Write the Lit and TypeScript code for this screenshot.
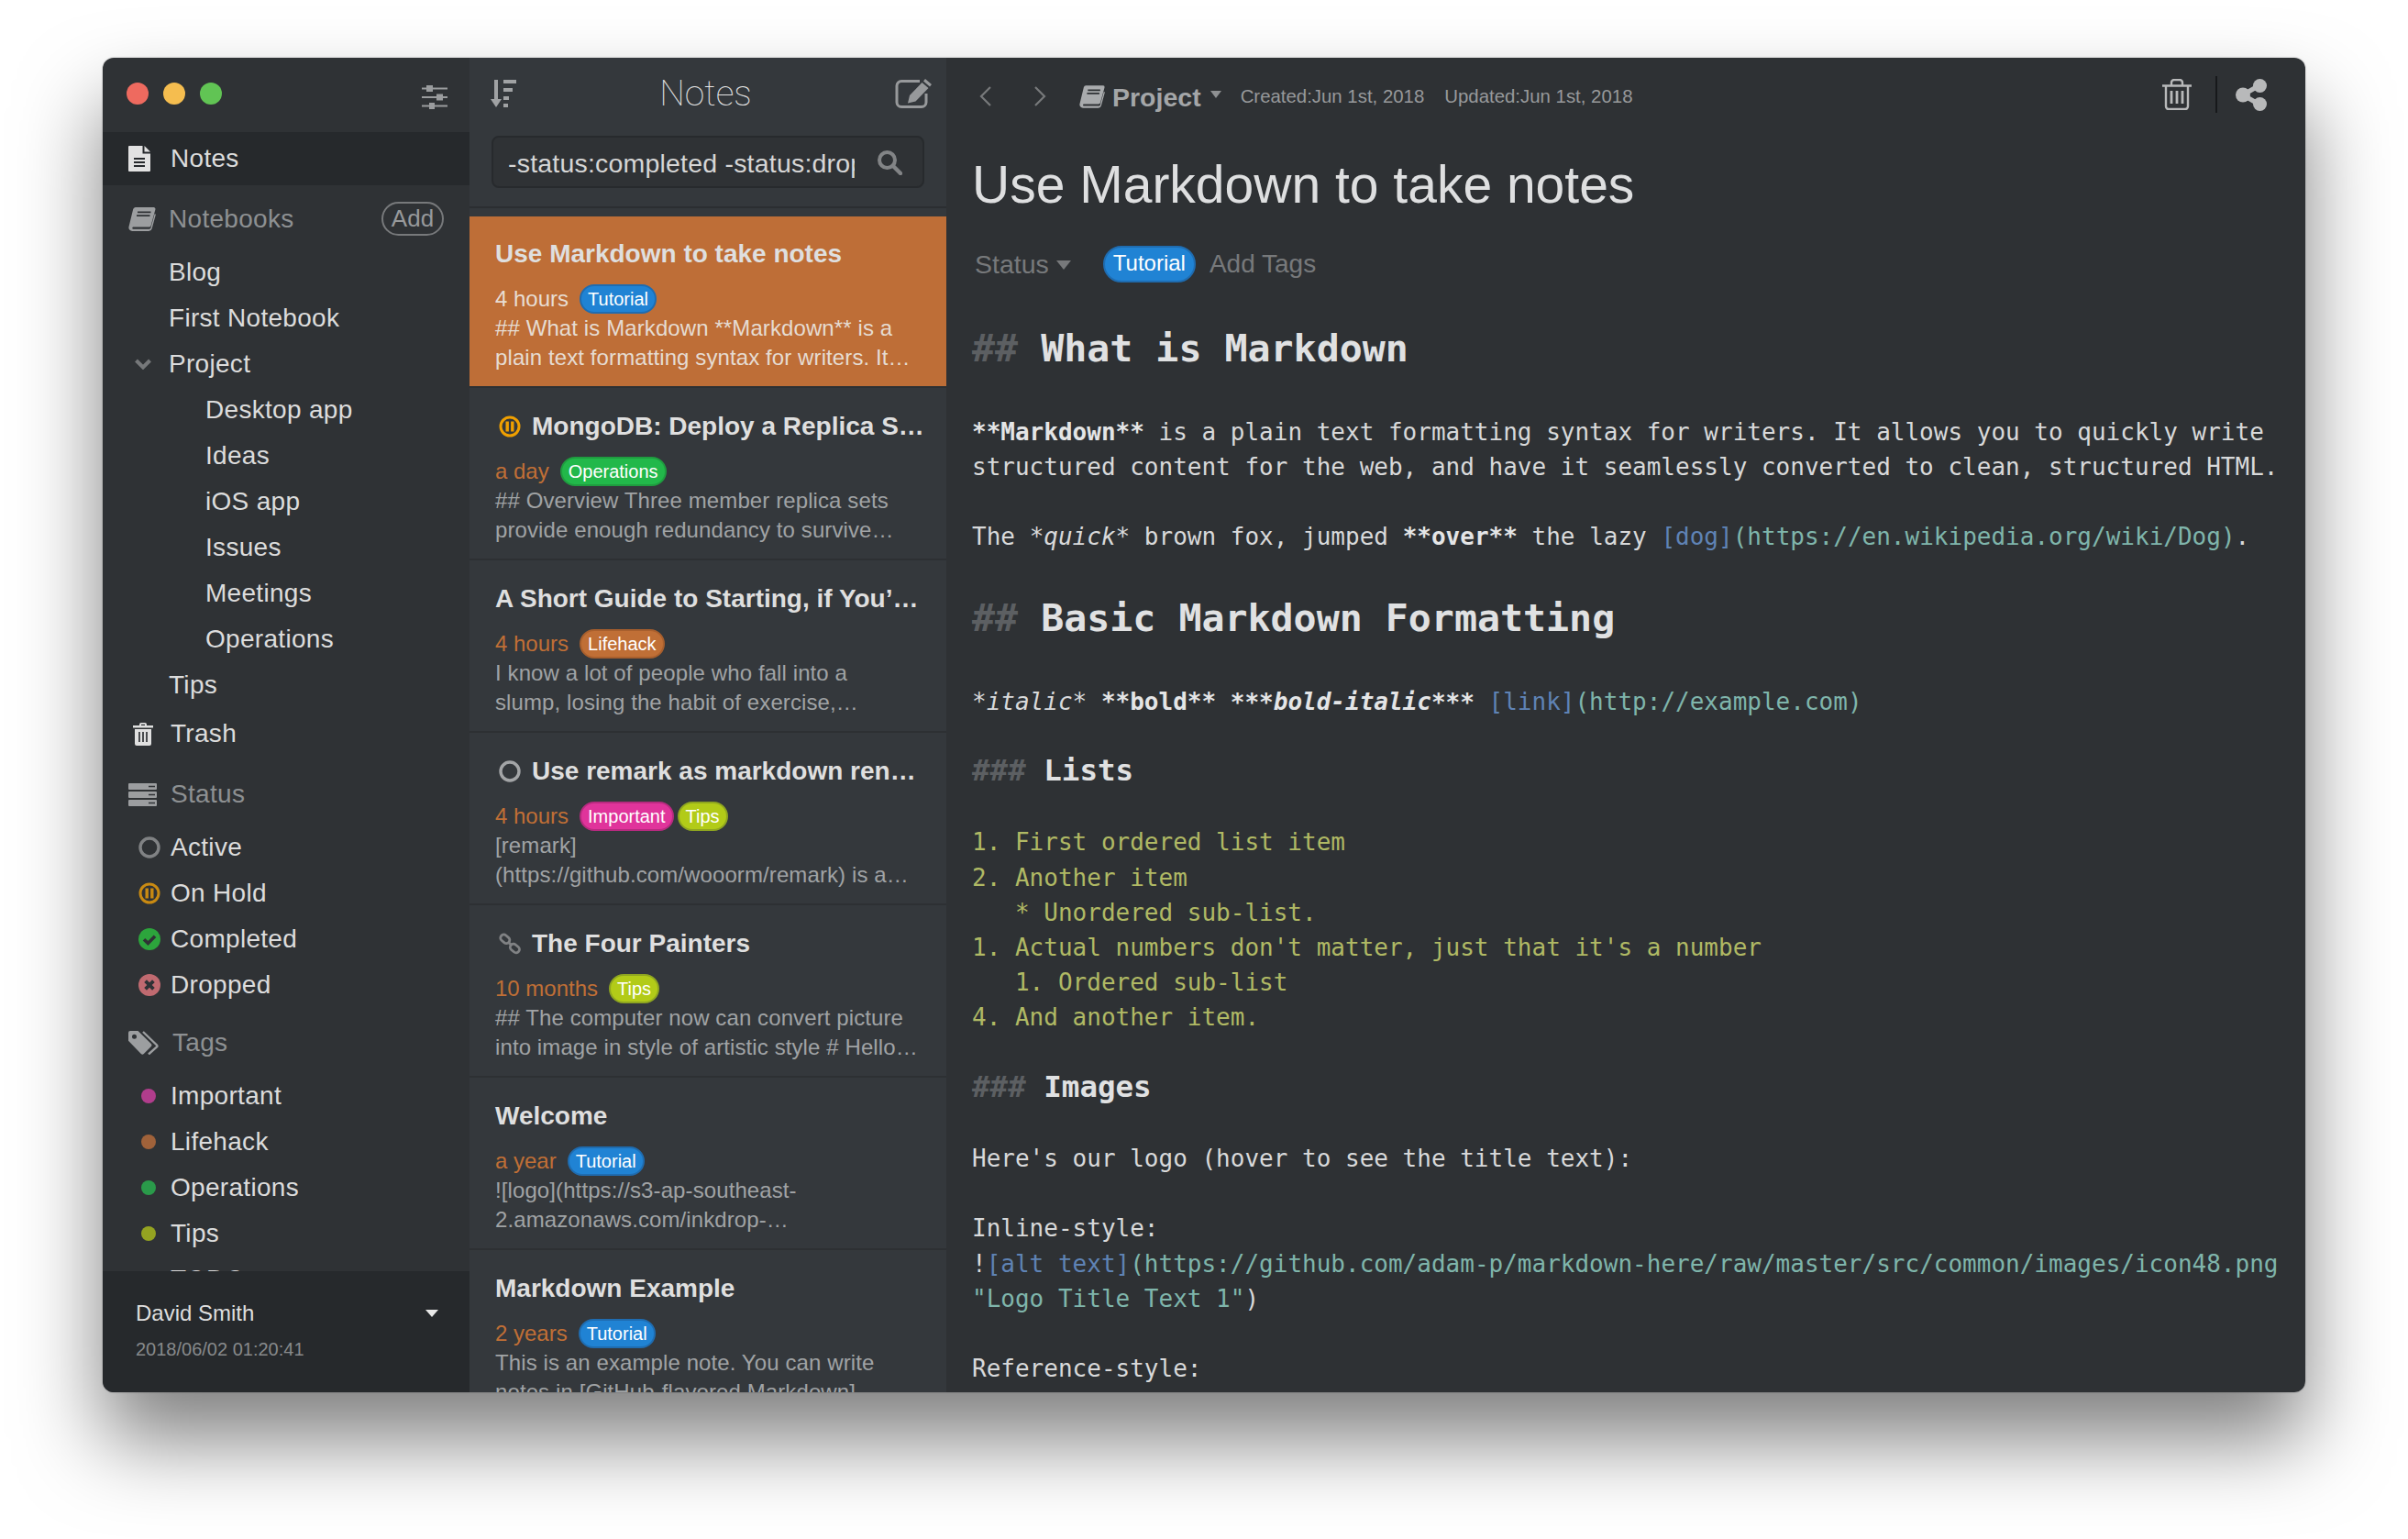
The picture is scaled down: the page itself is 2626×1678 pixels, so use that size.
import { LitElement, html, css } from "lit"
import { customElement } from "lit/decorators.js"

const notebook = (cls: string) => html`<svg class=${cls} viewBox="0 0 30 26"><path fill="currentColor" d="M7.6 0H27.4a2 2 0 0 1 2 2.5L24.6 20a2.2 2.2 0 0 1-2.1 1.6H5.8c-2 0-2 2.2 0 2.2h17c.8 0 1.4-.4 1.6-1.2L28.7 7l1.2.7-4.2 15.6A3.6 3.6 0 0 1 22.2 26H4.3A3.9 3.9 0 0 1 .5 21.2L5.2 2A3 3 0 0 1 7.6 0z"/><path stroke="#2f3235" stroke-width="1.8" d="M10 5.4h14.5M9 9.2h14.5"/></svg>`

const statusIcon = (kind: string, bright = false) => {
  const hold = bright ? "#f0a000" : "#c98a12"
  const ring = bright ? "#a3a5a7" : "#808284"
  if (kind === "active") return html`<svg class="st" viewBox="0 0 24 24"><circle cx="12" cy="12" r="10" fill="none" stroke=${ring} stroke-width="3.4"/></svg>`
  if (kind === "hold") return html`<svg class="st" viewBox="0 0 24 24"><circle cx="12" cy="12" r="10" fill="none" stroke=${hold} stroke-width="3"/><path fill=${hold} d="M7.5 6.5h3.4v11H7.5zM13.1 6.5h3.4v11h-3.4z"/></svg>`
  if (kind === "done") return html`<svg class="st" viewBox="0 0 24 24"><circle cx="12" cy="12" r="12" fill="#2ca53c"/><path fill="none" stroke="#2f3235" stroke-width="3.6" d="M6 12.2l4.4 4.2L18 8.8"/></svg>`
  if (kind === "drop") return html`<svg class="st" viewBox="0 0 24 24"><circle cx="12" cy="12" r="12" fill="#c06a70"/><path fill="none" stroke="#2f3235" stroke-width="3.8" d="M7.6 7.6l8.8 8.8M16.4 7.6l-8.8 8.8"/></svg>`
  return html`<svg class="st" viewBox="0 0 24 24"><g fill="none" stroke="#808284" stroke-width="2.8"><rect x="-5.4" y="-3.6" width="10.8" height="7.2" rx="3.4" transform="translate(6.8 6.8) rotate(40)"/><rect x="-5.4" y="-3.6" width="10.8" height="7.2" rx="3.4" transform="translate(17.4 17) rotate(40)"/><path d="M10 10l4 3.6"/></g></svg>`
}

const notes = [
  { title: "Use Markdown to take notes", time: "4 hours", tags: ["Tutorial"], lines: ["## What is Markdown **Markdown** is a", "plain text formatting syntax for writers. It…"], on: true },
  { icon: "hold", title: "MongoDB: Deploy a Replica S…", time: "a day", tags: ["Operations"], lines: ["## Overview Three member replica sets", "provide enough redundancy to survive…"] },
  { title: "A Short Guide to Starting, if You’…", time: "4 hours", tags: ["Lifehack"], lines: ["I know a lot of people who fall into a", "slump, losing the habit of exercise,…"] },
  { icon: "active", title: "Use remark as markdown ren…", time: "4 hours", tags: ["Important", "Tips"], lines: ["[remark]", "(https://github.com/wooorm/remark) is a…"] },
  { icon: "link", title: "The Four Painters", time: "10 months", tags: ["Tips"], lines: ["## The computer now can convert picture", "into image in style of artistic style # Hello…"] },
  { title: "Welcome", time: "a year", tags: ["Tutorial"], lines: ["![logo](https://s3-ap-southeast-", "2.amazonaws.com/inkdrop-…"] },
  { title: "Markdown Example", time: "2 years", tags: ["Tutorial"], lines: ["This is an example note. You can write", "notes in [GitHub-flavored Markdown]"] },
]

const books = [["Blog", 0], ["First Notebook", 0], ["Project", 0], ["Desktop app", 1], ["Ideas", 1], ["iOS app", 1], ["Issues", 1], ["Meetings", 1], ["Operations", 1], ["Tips", 0]] as const

@customElement("app-root")
export class AppRoot extends LitElement {
  static styles = css`
    :host {
      display: block;
      width: 2626px;
      height: 1678px;
      box-sizing: border-box;
      padding: 63px 112px 0;
      background: #fff;
      overflow: hidden;
      font-family: "Liberation Sans", Arial, sans-serif;
    }
    svg { display: block; flex: none; }
    .window {
      display: flex;
      height: 1455px;
      border-radius: 12px;
      overflow: hidden;
      box-shadow: 0 52px 90px rgba(0, 0, 0, 0.5), 0 0 2px rgba(0, 0, 0, 0.3);
    }

    /* sidebar */
    .side { width: 400px; flex: none; display: flex; flex-direction: column; background: #2f3235; color: #dcdcdc; font-size: 28px; letter-spacing: 0.3px; }
    .side-top { height: 81px; flex: none; display: flex; align-items: center; padding: 0 24px 0 26px; }
    .lights { display: flex; gap: 16px; margin-top: -4px; flex: 1; }
    .lights i { width: 24px; height: 24px; border-radius: 50%; }
    .red { background: #ee6a5f; }
    .yellow { background: #f5bd4f; }
    .green { background: #61c454; }
    .filter { width: 28px; height: 26px; color: #9a9c9e; margin-top: 4px; }
    .scroll { flex: 1; overflow: hidden; min-height: 0; }
    .row { height: 50px; display: flex; align-items: center; padding-left: 72px; }
    .row.sub { padding-left: 112px; }
    .row.icon { padding-left: 28px; }
    .row.project { padding-left: 28px; }
    .row.notes { height: 58px; background: #26292c; }
    .slot { width: 46px; flex: none; display: flex; align-items: center; }
    .row.project .slot { width: 44px; }
    .doc { width: 24px; height: 28px; color: #e2e2e2; }
    .head { height: 71px; box-sizing: border-box; padding: 5px 22px 0 28px; display: flex; align-items: center; color: #8d9092; }
    .head.first { height: 70px; padding-top: 3px; }
    .head.first .slot { width: 44px; }
    .head .grow { flex: 1; }
    .head.tags .slot { width: 48px; }
    .bk { width: 30px; height: 26px; color: #9c9ea0; }
    .add { box-sizing: border-box; width: 68px; height: 37px; border: 2px solid #77797b; border-radius: 19px; font-size: 26px; line-height: 32px; letter-spacing: 0; text-align: center; color: #97999b; margin-right: 6px; }
    .chev { width: 18px; height: 12px; margin-left: 7px; color: #76787a; }
    .trash { height: 56px; }
    .trash svg { width: 22px; height: 25px; margin-left: 5px; color: #e0e0e0; }
    .stack { width: 31px; height: 25px; color: #9c9ea0; }
    .tagsic { width: 33px; height: 26px; color: #9c9ea0; }
    .st { width: 24px; height: 24px; }
    .slot .st { margin-left: 11px; }
    .dot { width: 16px; height: 16px; border-radius: 50%; margin-left: 14px; }
    .foot { height: 132px; flex: none; box-sizing: border-box; background: #26292c; padding: 31px 24px 0 36px; letter-spacing: 0; }
    .user { display: flex; justify-content: space-between; align-items: center; font-size: 24px; line-height: 30px; color: #dedede; }
    .user i { width: 0; height: 0; border: 7px solid transparent; border-top: 8px solid #e8e8e8; border-bottom: 0; margin-right: 10px; }
    .date { margin-top: 9px; font-size: 20px; line-height: 30px; color: #87898b; }

    /* note list */
    .list { width: 520px; flex: none; display: flex; flex-direction: column; background: #34383c; overflow: hidden; }
    .list-top { height: 78px; flex: none; display: flex; align-items: center; justify-content: space-between; padding: 0 16px 0 23px; }
    .list-top h1 { margin: 0; font: 100 39px Roboto, sans-serif; color: #e6e6e6; }
    .sort { width: 28px; height: 30px; color: #a0a2a4; }
    .newn { width: 40px; height: 32px; color: #97999b; }
    .search { height: 57px; margin: 7px 24px 0; box-sizing: border-box; flex: none; display: flex; align-items: center; border: 2px solid #272a2d; border-radius: 8px; background: #2f3235; padding: 0 0 0 16px; }
    .search span { width: 378px; margin-top: 4px; overflow: hidden; white-space: nowrap; font-size: 28.5px; letter-spacing: 0.2px; color: #d6d6d6; }
    .search svg { width: 28px; height: 28px; margin: 0 0 0 24px; color: #828486; }
    .rule { height: 2px; margin-top: 20px; margin-bottom: 8px; flex: none; background: #2b2e31; }
    .item { height: 188px; flex: none; box-sizing: border-box; padding: 23px 0 0 28px; border-bottom: 2px solid #2d3033; border-top: 1px solid transparent; }
    .item.on { background: #be6e37; background-clip: padding-box; }
    .ttl { height: 36px; display: flex; align-items: center; gap: 12px; white-space: nowrap; font-size: 28px; font-weight: 700; color: #dfdfdf; }
    .ttl .st { margin-left: 4px; }
    .meta { height: 32px; margin-top: 15px; display: flex; align-items: center; gap: 4px; font-size: 24px; color: #c06f36; }
    .meta b { font-weight: 400; margin-right: 8px; }
    .on .meta b { color: #e8ddd3; }
    .pill { box-sizing: border-box; height: 32px; padding: 0 7px; border-radius: 16px; border: 2px solid; font-size: 20px; line-height: 28px; color: #fff; }
    .Tutorial { background: #2083d4; border-color: #1f6cb0; }
    .Operations { background: #22b84a; border-color: #1f9c3f; }
    .Lifehack { background: #c06f36; border-color: #a85f2d; }
    .Important { background: #e0349b; border-color: #b82a80; }
    .Tips { background: #b2cb18; border-color: #8fa620; }
    .prev { font-size: 24px; line-height: 32px; letter-spacing: 0.1px; white-space: nowrap; color: #a0a3a5; }
    .on .prev { color: #e6dcd2; }

    /* editor */
    .edit { flex: 1; min-width: 0; display: flex; flex-direction: column; background: #2e3134; overflow: hidden; padding-left: 28px; }
    .bar { height: 84px; flex: none; display: flex; align-items: center; padding-right: 42px; color: #a9abad; }
    .nav { width: 16px; height: 24px; margin-left: 7px; color: #77797b; }
    .nav.n2 { margin-left: 43px; }
    .bar .bk { width: 28px; height: 27px; margin-left: 35px; color: #a9abad; }
    .proj { margin: 2px 0 0 8px; font-size: 28.5px; font-weight: 700; color: #a4a6a8; }
    .caret { width: 0; height: 0; border: 6.5px solid transparent; border-top: 8px solid #8e9092; border-bottom: 0; margin: 0 21px 4px 10px; }
    .stamp { font-size: 20.4px; color: #97999b; margin-right: 22px; }
    .fill { flex: 1; }
    .bin { width: 32px; height: 34px; color: #b8b9ba; margin: 0 26px 4px 0; }
    .sep { width: 2px; height: 40px; background: #17191b; margin: 0 20px 4px 0; }
    .share { width: 34px; height: 35px; color: #b8b9ba; margin-bottom: 4px; }
    .title { margin: 14px 0 0; font-size: 57px; font-weight: 400; line-height: 80px; color: #dedfe0; white-space: nowrap; }
    .status { height: 40px; margin-top: 27px; padding-left: 3px; flex: none; display: flex; align-items: center; font-size: 28.5px; color: #77797b; }
    .status .caret { border-width: 8.5px; border-top: 10px solid #77797b; border-bottom: 0; margin: 2px 0 0 8px; }
    .status .big { box-sizing: border-box; height: 40px; margin: 0 15px 0 35px; padding: 0 9px; border: 2px solid #1f6cb0; border-radius: 20px; background: #2083d4; font-size: 24px; line-height: 34px; color: #fff; }
    .tagadd { font-size: 28px; }
    .doc-body { padding-top: 40.5px; font-family: "DejaVu Sans Mono", "Liberation Mono", monospace; font-size: 26px; line-height: 38.2px; color: #d8d9da; }
    .doc-body div { min-height: 38.2px; white-space: pre; }
    .doc-body .h2 { font-size: 41.6px; line-height: 61px; padding-bottom: 4px; font-weight: 700; color: #e0e1e2; }
    .doc-body .h3 { font-size: 32.5px; line-height: 37px; min-height: 37px; padding-bottom: 2px; font-weight: 700; color: #e0e1e2; }
    .mk { color: #5c5f62; }
    .li { color: #b0b964; }
    .lk { color: #5f83b5; }
    .url { color: #7fb5ab; }
    em { font-style: italic; }
    strong { font-weight: 700; color: #e4e5e6; }
  `

  renderSidebar() {
    return html`<aside class="side">
      <div class="side-top">
        <div class="lights"><i class="red"></i><i class="yellow"></i><i class="green"></i></div>
        <svg class="filter" viewBox="0 0 28 26"><path fill="none" stroke="currentColor" stroke-width="2" d="M0 3.5h28M0 13h28M0 22.5h28"/><path fill="currentColor" d="M5 0h7v7H5zM16 9.500h7v7h-7zM8 19h6v7H8z"/></svg>
      </div>
      <div class="row icon notes"><span class="slot"><svg class="doc" viewBox="0 0 24 28"><path fill="currentColor" d="M1 0h14.500v8.500H24V27a1 1 0 0 1-1 1H1a1 1 0 0 1-1-1V1a1 1 0 0 1 1-1zM17.500 0L24 6.500h-6.500z"/><path stroke="#26292c" stroke-width="1.800" d="M6 14h12M6 18h12M6 22h12"/></svg></span>Notes</div>
      <div class="scroll">
        <div class="head first"><span class="slot">${notebook("bk")}</span><span class="grow">Notebooks</span><span class="add">Add</span></div>
        ${books.map(([name, sub]) => html`<div class="row ${sub ? "sub" : ""} ${name === "Project" ? "project" : ""}">
          ${name === "Project" ? html`<span class="slot"><svg class="chev" viewBox="0 0 18 12"><path fill="none" stroke="currentColor" stroke-width="4" d="M1.500 2l7.500 7.500L16.500 2"/></svg></span>` : ""}${name}</div>`)}
        <div class="row icon trash"><span class="slot"><svg viewBox="0 0 22 25"><path fill="currentColor" d="M7 3V2a2 2 0 0 1 2-2h4a2 2 0 0 1 2 2v1h7v2.500H0V3zm2 0h4V1.800H9zM2 7h18v16a2 2 0 0 1-2 2H4a2 2 0 0 1-2-2z"/><path stroke="#2f3235" stroke-width="1.700" d="M7 10v11M11 10v11M15 10v11"/></svg></span>Trash</div>
        <div class="head"><span class="slot"><svg class="stack" viewBox="0 0 31 25"><path fill="currentColor" d="M1 0h29a1 1 0 0 1 1 1v5a1 1 0 0 1-1 1H1a1 1 0 0 1-1-1V1a1 1 0 0 1 1-1zM1 9h29a1 1 0 0 1 1 1v5a1 1 0 0 1-1 1H1a1 1 0 0 1-1-1v-5a1 1 0 0 1 1-1zM1 18h29a1 1 0 0 1 1 1v5a1 1 0 0 1-1 1H1a1 1 0 0 1-1-1v-5a1 1 0 0 1 1-1z"/><path stroke="#2f3235" stroke-width="1.600" d="M22 3.500h7M22 12.500h7M22 21.500h7"/></svg></span>Status</div>
        ${[["active", "Active"], ["hold", "On Hold"], ["done", "Completed"], ["drop", "Dropped"]].map(([k, n]) => html`<div class="row icon"><span class="slot">${statusIcon(k)}</span>${n}</div>`)}
        <div class="head tags"><span class="slot"><svg class="tagsic" viewBox="0 0 33 26"><path fill="currentColor" fill-rule="evenodd" d="M2 0h8.500l14.300 14a2.200 2.200 0 0 1 0 3l-8 8a2.200 2.200 0 0 1-3 0L0 10.800V2a2 2 0 0 1 2-2zm4.500 3.800a2.500 2.500 0 1 0 0 5 2.500 2.500 0 0 0 0-5z"/><path fill="none" stroke="currentColor" stroke-width="2.400" d="M16 1l15 14.500a1.500 1.500 0 0 1 0 2L22 25.500"/></svg></span>Tags</div>
        ${[["#b13d8c", "Important"], ["#a0623a", "Lifehack"], ["#2a9a4a", "Operations"], ["#94a321", "Tips"], ["", "TODO"]].map(([c, n]) => html`<div class="row icon"><span class="slot">${c ? html`<i class="dot" style="background:${c}"></i>` : ""}</span>${n}</div>`)}
      </div>
      <div class="foot">
        <div class="user">David Smith<i></i></div>
        <div class="date">2018/06/02 01:20:41</div>
      </div>
    </aside>`
  }

  renderList() {
    return html`<section class="list">
      <div class="list-top">
        <svg class="sort" viewBox="0 0 28 30"><path fill="currentColor" d="M4 0h4v21h4L6 30 0 21h4zM14 0h14v4H14zM14 9h10v4H14zM14 18h6v4h-6zM14 26h5v4h-5z"/></svg>
        <h1>Notes</h1>
        <svg class="newn" viewBox="0 0 40 32"><path fill="none" stroke="currentColor" stroke-width="3" d="M27 2.500H7A5 5 0 0 0 2 7.500v18a5 5 0 0 0 5 5h22a5 5 0 0 0 5-5V16"/><path fill="currentColor" d="M33 0l7 6-2 2.500-7-6zM29.500 4l7 6-14 14.500-8.500 2 2-8.500z"/></svg>
      </div>
      <div class="search"><span>-status:completed -status:dropped</span><svg viewBox="0 0 28 28"><circle cx="11.500" cy="11.500" r="8.500" fill="none" stroke="currentColor" stroke-width="4"/><path stroke="currentColor" stroke-width="4.500" stroke-linecap="round" d="M18 18l8 8"/></svg></div>
      <div class="rule"></div>
      ${notes.map((n) => html`<article class="item ${n.on ? "on" : ""}">
        <div class="ttl">${n.icon ? statusIcon(n.icon, true) : ""}<span>${n.title}</span></div>
        <div class="meta"><b>${n.time}</b>${n.tags.map((t) => html`<span class="pill ${t}">${t}</span>`)}</div>
        ${n.lines.map((l) => html`<div class="prev">${l}</div>`)}
      </article>`)}
    </section>`
  }

  renderDoc() {
    const lk = (t: string, u: string) => html`<span class="lk">${t}</span><span class="url">${u}</span>`
    return html`<div class="doc-body">
      <div class="h2"><span class="mk">##</span> What is Markdown</div>
      <div></div>
      <div><strong>**Markdown**</strong> is a plain text formatting syntax for writers. It allows you to quickly write</div>
      <div>structured content for the web, and have it seamlessly converted to clean, structured HTML.</div>
      <div></div>
      <div>The <em>*quick*</em> brown fox, jumped <strong>**over**</strong> the lazy ${lk("[dog]", "(https://en.wikipedia.org/wiki/Dog)")}.</div>
      <div></div>
      <div class="h2"><span class="mk">##</span> Basic Markdown Formatting</div>
      <div></div>
      <div><em>*italic*</em> <strong>**bold**</strong> <strong><em>***bold-italic***</em></strong> ${lk("[link]", "(http://example.com)")}</div>
      <div></div>
      <div class="h3"><span class="mk">###</span> Lists</div>
      <div></div>
      <div class="li">1. First ordered list item</div>
      <div class="li">2. Another item</div>
      <div class="li">   * Unordered sub-list.</div>
      <div class="li">1. Actual numbers don't matter, just that it's a number</div>
      <div class="li">   1. Ordered sub-list</div>
      <div class="li">4. And another item.</div>
      <div></div>
      <div class="h3"><span class="mk">###</span> Images</div>
      <div></div>
      <div>Here's our logo (hover to see the title text):</div>
      <div></div>
      <div>Inline-style:</div>
      <div>!${lk("[alt text]", "(https://github.com/adam-p/markdown-here/raw/master/src/common/images/icon48.png")}</div>
      <div><span class="url">"Logo Title Text 1"</span>)</div>
      <div></div>
      <div>Reference-style:</div>
      <div>!<span class="lk">[alt text]</span><span class="lk">[logo]</span></div>
    </div>`
  }

  render() {
    return html`<div class="window">
      ${this.renderSidebar()}
      ${this.renderList()}
      <main class="edit">
        <div class="bar">
          <svg class="nav" viewBox="0 0 16 24"><path fill="none" stroke="currentColor" stroke-width="2.200" d="M13 2L3 12l10 10"/></svg>
          <svg class="nav n2" viewBox="0 0 16 24"><path fill="none" stroke="currentColor" stroke-width="2.200" d="M3 2l10 10L3 22"/></svg>
          ${notebook("bk")}
          <span class="proj">Project</span><i class="caret"></i>
          <span class="stamp">Created:Jun 1st, 2018</span>
          <span class="stamp">Updated:Jun 1st, 2018</span>
          <span class="fill"></span>
          <svg class="bin" viewBox="0 0 32 34"><path fill="none" stroke="currentColor" stroke-width="2.400" stroke-linejoin="round" d="M0 7.500h32M10 7.500V4a3 3 0 0 1 3-3h6a3 3 0 0 1 3 3v3.500M4 7.500V30a3 3 0 0 0 3 3h18a3 3 0 0 0 3-3V7.500"/><path stroke="currentColor" stroke-width="2.800" d="M10 13v14M16 13v14M22 13v14"/></svg>
          <i class="sep"></i>
          <svg class="share" viewBox="0 0 34 35"><path stroke="currentColor" stroke-width="5" d="M8 17.500L26 7M8 17.500L26 28"/><circle cx="8" cy="17.500" r="8" fill="currentColor"/><circle cx="26.500" cy="7.500" r="7.500" fill="currentColor"/><circle cx="26.500" cy="27.500" r="7.500" fill="currentColor"/></svg>
        </div>
        <h2 class="title">Use Markdown to take notes</h2>
        <div class="status">Status<i class="caret"></i><span class="big">Tutorial</span><span class="tagadd">Add Tags</span></div>
        ${this.renderDoc()}
      </main>
    </div>`
  }
}
